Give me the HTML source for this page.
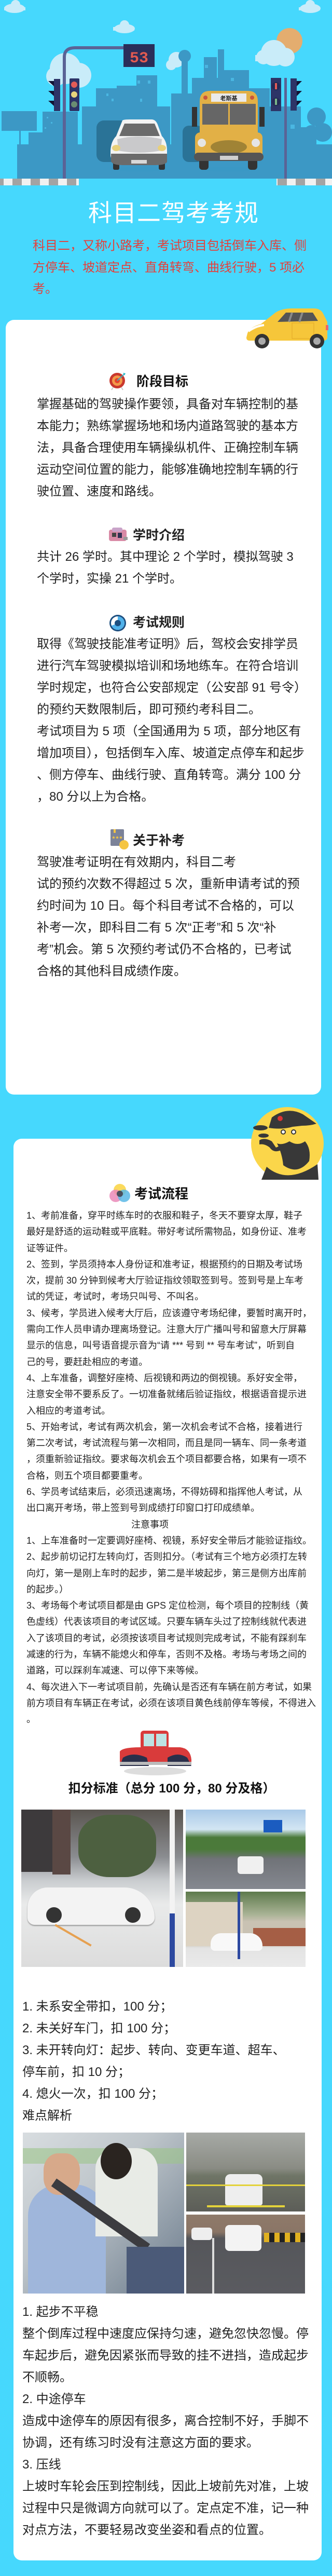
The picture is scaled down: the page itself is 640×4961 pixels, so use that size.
<!DOCTYPE html>
<html><head><meta charset="utf-8">
<style>
*{margin:0;padding:0;box-sizing:border-box}
html,body{width:640px;height:4961px;overflow:hidden}
body{background:#46d8fd;position:relative;font-family:"Liberation Sans","Noto Sans CJK SC",sans-serif;color:#222}
.abs{position:absolute}
.card{position:absolute;background:#fff;border-radius:16px}
.ln{white-space:nowrap}
.p24{font-size:24px;line-height:42px}
.p18{font-size:18px;line-height:31.3px}
.h{font-size:25px;font-weight:bold;line-height:42px;white-space:nowrap;color:#111}
.photo{position:absolute;overflow:hidden}
</style></head><body>

<!-- HERO -->
<svg class="abs" style="left:0;top:0" width="640" height="370" viewBox="0 0 640 370">
  <!-- clouds -->
  <g fill="#c9ecf9">
    <ellipse cx="28" cy="16" rx="20" ry="9"/><circle cx="30" cy="9" r="9"/><rect x="8" y="14" width="41" height="6"/>
    <ellipse cx="598" cy="16" rx="20" ry="9"/><circle cx="598" cy="9" r="9"/><rect x="576" y="14" width="41" height="6"/>
    <ellipse cx="240" cy="55" rx="20" ry="9"/><circle cx="240" cy="48" r="9"/><rect x="218" y="52" width="41" height="7"/>
    <circle cx="126" cy="132" r="30"/><circle cx="152" cy="145" r="24"/><circle cx="108" cy="147" r="19"/>
    <circle cx="340" cy="115" r="15"/><circle cx="330" cy="125" r="10"/>
  </g>
  <circle cx="558" cy="79" r="25" fill="#e4ad6f"/>
  <g fill="#c9ecf9"><circle cx="528" cy="102" r="25"/><circle cx="550" cy="110" r="18"/><circle cx="508" cy="110" r="14"/><rect x="492" y="106" width="74" height="12"/></g>
  <!-- buildings -->
  <g fill="#3c98c5">
    <rect x="33" y="278" width="607" height="66"/>
    <rect x="55" y="255" width="30" height="30"/>
    <rect x="82" y="215" width="68" height="70"/>
    <rect x="158" y="205" width="45" height="80"/>
    <rect x="185" y="170" width="40" height="70"/>
    <rect x="225" y="165" width="40" height="120"/>
    <rect x="263" y="145" width="40" height="140"/>
    <rect x="300" y="205" width="28" height="80"/>
    <rect x="330" y="180" width="40" height="110"/>
    <rect x="350" y="115" width="12" height="120"/>
    <circle cx="356" cy="108" r="12"/>
    <rect x="370" y="150" width="50" height="140"/>
    <rect x="393" y="110" width="25" height="60"/>
    <rect x="420" y="95" width="12" height="200"/>
    <rect x="432" y="135" width="48" height="160"/>
    <rect x="480" y="170" width="40" height="120"/>
    <rect x="520" y="205" width="60" height="90"/>
    <rect x="580" y="245" width="30" height="50"/>
    <circle cx="610" cy="225" r="18"/><circle cx="622" cy="255" r="18"/><circle cx="600" cy="255" r="14"/>
  </g>
  <g fill="#4ab7e2">
    <rect x="205" y="180" width="4" height="5"/><rect x="215" y="190" width="4" height="5"/><rect x="265" y="155" width="5" height="6"/><rect x="285" y="155" width="5" height="6"/>
    <rect x="270" y="190" width="4" height="6"/><rect x="90" y="225" width="3" height="3"/><rect x="98" y="235" width="3" height="3"/><rect x="86" y="245" width="3" height="3"/>
    <rect x="395" y="125" width="6" height="6"/><rect x="445" y="150" width="6" height="6"/><rect x="460" y="175" width="6" height="6"/><rect x="560" y="240" width="8" height="8"/>
  </g>
  <!-- billboard -->
  <rect x="3" y="214" width="68" height="38" fill="#3c98c5"/><rect x="37" y="250" width="3" height="94" fill="#3c98c5"/>
  <!-- left traffic pole -->
  <path d="M124 344 V110 Q124 92 145 92 H240" stroke="#5a6396" stroke-width="6" fill="none"/>
  <rect x="238" y="85" width="60" height="44" fill="#2a2f5a"/>
  <text x="268" y="120" text-anchor="middle" font-size="30" fill="#e25a50" font-family="Liberation Mono,monospace" font-weight="bold">53</text>
  <rect x="104" y="152" width="12" height="62" fill="#2d3467"/>
  <path d="M93 156h11v10zM93 175h11v10zM93 194h11v10z" fill="#121535"/>
  <rect x="134" y="151" width="19" height="63" rx="2" fill="#2d3467"/>
  <circle cx="143" cy="163" r="6" fill="#e35b57"/><circle cx="143" cy="182" r="6" fill="#e9d57c"/><circle cx="143" cy="201" r="6" fill="#6a8d72"/>
  <!-- right lights -->
  <rect x="548" y="150" width="5" height="194" fill="#5a6396"/>
  <rect x="522" y="150" width="20" height="64" fill="#2d3467"/>
  <circle cx="532" cy="166" r="8" fill="#242a55"/><circle cx="532" cy="196" r="8" fill="#242a55"/>
  <rect x="530" y="160" width="4" height="12" fill="#e35b57"/><rect x="530" y="190" width="4" height="12" fill="#7bb58a"/>
  <rect x="560" y="151" width="12" height="62" fill="#2d3467"/>
  <path d="M572 156h10l-10 10zM572 175h10l-10 10zM572 194h10l-10 10z" fill="#121535"/>
  <!-- dark cars behind -->
  <rect x="186" y="232" width="60" height="80" rx="14" fill="#2a7397"/>
  <rect x="352" y="242" width="40" height="70" rx="12" fill="#2a7397"/>
  <!-- white car -->
  <ellipse cx="268" cy="326" rx="52" ry="4" fill="#3a98c5"/>
  <rect x="218" y="305" width="12" height="22" rx="3" fill="#333"/><rect x="306" y="305" width="12" height="22" rx="3" fill="#333"/>
  <path d="M236 232 Q238 230 250 230 H292 Q300 230 304 240 L312 262 Q322 272 322 290 V300 Q318 318 300 318 H236 Q216 318 213 300 V290 Q214 272 224 262 Z" fill="#f3f3f3"/>
  <path d="M230 262 L240 238 H298 L308 262Z" fill="#6b6b6b"/>
  <path d="M226 268 Q268 258 312 268 L310 290 Q268 298 228 290Z" fill="#c9c9cb"/>
  <path d="M214 296 H322 V312 Q318 318 300 318 H236 Q216 318 214 310Z" fill="#6b6b6b"/>
  <rect x="253" y="308" width="30" height="7" fill="#d8d8d8"/>
  <ellipse cx="224" cy="285" rx="8" ry="6" fill="#e8d07a"/><ellipse cx="312" cy="285" rx="8" ry="6" fill="#e8d07a"/>
  <!-- bus -->
  <ellipse cx="440" cy="326" rx="60" ry="4" fill="#3a98c5"/>
  <rect x="384" y="305" width="18" height="22" rx="6" fill="#333"/><rect x="478" y="305" width="18" height="22" rx="6" fill="#333"/>
  <rect x="370" y="206" width="10" height="38" fill="#333"/><rect x="500" y="206" width="10" height="38" fill="#333"/>
  <path d="M385 195 Q385 175 405 175 H478 Q497 175 497 195 V258 H385 Z" fill="#e2b046"/>
  <rect x="376" y="255" width="130" height="55" rx="10" fill="#e2b046"/>
  <rect x="407" y="180" width="68" height="16" fill="#eaeaea"/>
  <text x="441" y="193" text-anchor="middle" font-size="11" font-weight="bold" fill="#222">老斯基</text>
  <circle cx="396" cy="188" r="4" fill="#c9553e"/><circle cx="486" cy="188" r="4" fill="#c9553e"/>
  <rect x="390" y="200" width="50" height="40" fill="#666"/><rect x="443" y="200" width="50" height="40" fill="#666"/>
  <ellipse cx="441" cy="283" rx="35" ry="13" fill="#a08335"/>
  <circle cx="389" cy="275" r="8" fill="#e5e5e5"/><circle cx="493" cy="275" r="8" fill="#e5e5e5"/>
  <rect x="374" y="294" width="134" height="16" rx="8" fill="#555"/>
  <rect x="424" y="300" width="35" height="8" fill="#d0d0d0"/>
  <!-- curb -->
  <g><rect x="0" y="344" width="152" height="13" fill="#f1f1f1"/><rect x="533" y="344" width="107" height="13" fill="#f1f1f1"/>
  <g fill="#a3a3a3"><rect x="0" y="344" width="7" height="13"/><rect x="24" y="344" width="18" height="13"/><rect x="59" y="344" width="18" height="13"/><rect x="94" y="344" width="18" height="13"/><rect x="129" y="344" width="18" height="13"/>
  <rect x="535" y="344" width="18" height="13"/><rect x="570" y="344" width="18" height="13"/><rect x="609" y="344" width="18" height="13"/></g></g>
</svg>

<div class="abs" style="left:170px;top:382px;font-size:46px;line-height:56px;color:#fff;white-space:nowrap;letter-spacing:1px">科目二驾考考规</div>
<div class="abs p24" style="left:63px;top:453px;color:#e5403b;line-height:41.5px">
<div class="ln">科目二，又称小路考，考试项目包括倒车入库、侧</div>
<div class="ln">方停车、坡道定点、直角转弯、曲线行驶，5 项必</div>
<div class="ln">考。</div></div>

<!-- CARD 1 -->
<div class="card" style="left:11px;top:616px;width:608px;height:1492px"></div>
<!-- yellow car -->
<svg class="abs" style="left:473px;top:590px" width="162" height="84" viewBox="0 0 162 84">
  <path d="M4 52 Q8 40 30 34 L58 12 Q70 4 90 4 H132 Q145 4 150 14 L158 30 V60 Q158 66 150 66 H8 Q2 66 2 60Z" fill="#f6c63a"/>
  <path d="M62 30 L78 12 H130 L140 28Z" fill="#555"/>
  <path d="M90 12 L84 30 M110 12 L104 30" stroke="#8a8a8a" stroke-width="4"/>
  <path d="M6 48 Q20 38 36 36" stroke="#fff" stroke-width="4" fill="none"/>
  <rect x="90" y="32" width="42" height="30" fill="none" stroke="#e2a826" stroke-width="1"/>
  <circle cx="32" cy="67" r="14" fill="#333"/><circle cx="32" cy="67" r="7" fill="#aaa"/>
  <circle cx="138" cy="67" r="14" fill="#333"/><circle cx="138" cy="67" r="7" fill="#aaa"/>
  <rect x="155" y="36" width="5" height="10" fill="#e66"/>
</svg>

<!-- headings card1 -->
<svg class="abs" style="left:210px;top:716px" width="34" height="36" viewBox="0 0 34 36"><circle cx="16" cy="17" r="15" fill="#c9382e"/><circle cx="16" cy="17" r="10" fill="#f29a4a"/><circle cx="16" cy="17" r="5" fill="#e4432f"/><path d="M16 17 L30 4" stroke="#4ab" stroke-width="2"/><path d="M27 2l5 1-2 4z" fill="#2bc"/><path d="M8 30l-3 5M24 30l3 5" stroke="#ccc" stroke-width="2"/></svg>
<div class="abs h" style="left:263px;top:714px">阶段目标</div>
<div class="abs p24" style="left:71px;top:758px">
<div class="ln">掌握基础的驾驶操作要领，具备对车辆控制的基</div>
<div class="ln">本能力；熟练掌握场地和场内道路驾驶的基本方</div>
<div class="ln">法，具备合理使用车辆操纵机件、正确控制车辆</div>
<div class="ln">运动空间位置的能力，能够准确地控制车辆的行</div>
<div class="ln">驶位置、速度和路线。</div>
<div class="ln">&nbsp;</div>
<div class="ln" style="position:relative;padding-left:185px;font-weight:bold;font-size:25px">学时介绍</div>
<div class="ln">共计 26 学时。其中理论 2 个学时，模拟驾驶 3</div>
<div class="ln">个学时，实操 21 个学时。</div>
<div class="ln">&nbsp;</div>
<div class="ln" style="padding-left:185px;font-weight:bold;font-size:25px">考试规则</div>
<div class="ln">取得《驾驶技能准考证明》后，驾校会安排学员</div>
<div class="ln">进行汽车驾驶模拟培训和场地练车。在符合培训</div>
<div class="ln">学时规定，也符合公安部规定（公安部 91 号令）</div>
<div class="ln">的预约天数限制后，即可预约考科目二。</div>
<div class="ln">考试项目为 5 项（全国通用为 5 项，部分地区有</div>
<div class="ln">增加项目），包括倒车入库、坡道定点停车和起步</div>
<div class="ln">、侧方停车、曲线行驶、直角转弯。满分 100 分</div>
<div class="ln">，80 分以上为合格。</div>
<div class="ln">&nbsp;</div>
<div class="ln" style="padding-left:185px;font-weight:bold;font-size:25px">关于补考</div>
<div class="ln">驾驶准考证明在有效期内，科目二考</div>
<div class="ln">试的预约次数不得超过 5 次，重新申请考试的预</div>
<div class="ln">约时间为 10 日。每个科目考试不合格的，可以</div>
<div class="ln">补考一次，即科目二有 5 次“正考”和 5 次“补</div>
<div class="ln">考”机会。第 5 次预约考试仍不合格的，已考试</div>
<div class="ln">合格的其他科目成绩作废。</div>
</div>
<!-- icons for headings 2-4 -->
<svg class="abs" style="left:208px;top:1014px" width="40" height="32" viewBox="0 0 40 32"><rect x="2" y="6" width="34" height="22" rx="4" fill="#d98aa6"/><rect x="8" y="2" width="20" height="8" rx="3" fill="#c9a3c9"/><rect x="8" y="12" width="8" height="8" fill="#444"/><rect x="19" y="12" width="8" height="10" fill="#335"/><rect x="30" y="20" width="8" height="6" fill="#999"/></svg>
<svg class="abs" style="left:210px;top:1183px" width="34" height="34" viewBox="0 0 34 34"><circle cx="17" cy="17" r="16" fill="#1d4f80"/><circle cx="17" cy="17" r="13" fill="#fff"/><path d="M17 4 A13 13 0 1 1 5 22 L17 17Z" fill="#4fb1ea"/><circle cx="17" cy="17" r="6" fill="#1d4f80"/></svg>
<svg class="abs" style="left:213px;top:1597px" width="36" height="40" viewBox="0 0 36 40"><rect x="0" y="0" width="26" height="32" rx="2" fill="#7b8298"/><rect x="6" y="0" width="4" height="7" fill="#f5c542"/><text x="13" y="18" font-size="7" fill="#f5c542" text-anchor="middle">★★★</text><circle cx="26" cy="30" r="9" fill="#f5c542"/></svg>

<!-- CARD 2 -->
<div class="card" style="left:26px;top:2193px;width:594px;height:2738px"></div>
<svg class="abs" style="left:484px;top:2132px" width="140" height="140" viewBox="0 0 140 140">
  <circle cx="70" cy="70" r="70" fill="#fbd64a"/>
  <path d="M40 20 Q70 -2 100 14 L126 32 Q114 36 98 36 L80 38 Q60 44 34 40 Z" fill="#383838"/>
  <circle cx="56" cy="22" r="5" fill="#d33"/>
  <path d="M46 42 Q48 80 60 100 L70 110 Q100 120 112 96 Q120 80 112 56 Q108 42 100 40 Z" fill="#fbd64a"/>
  <path d="M50 70 Q60 90 62 112 Q90 132 112 104 Q116 80 104 66 Q90 76 74 66 Q60 74 50 70Z" fill="#383838"/>
  <path d="M30 115 Q70 150 128 110 L130 140 H20Z" fill="#383838"/>
  <path d="M16 64 Q26 58 40 66 L48 78 L62 72 L60 82 Q44 90 36 78 Q26 70 16 72Z" fill="#383838"/>
  <ellipse cx="18" cy="40" rx="14" ry="5" fill="#383838"/><ellipse cx="24" cy="55" rx="10" ry="4" fill="#383838"/><ellipse cx="26" cy="66" rx="6" ry="3" fill="#383838"/>
  <circle cx="62" cy="48" r="4" fill="#fff" stroke="#333" stroke-width="2"/><circle cx="82" cy="48" r="4" fill="#fff" stroke="#333" stroke-width="2"/>
</svg>
<svg class="abs" style="left:211px;top:2279px" width="40" height="38" viewBox="0 0 40 38"><circle cx="20" cy="13" r="12" fill="#fbd64a" opacity=".9"/><circle cx="12" cy="24" r="12" fill="#ea8ab9" opacity=".85"/><circle cx="28" cy="24" r="12" fill="#5ab9e6" opacity=".85"/><circle cx="20" cy="20" r="6" fill="#4a4f5e"/></svg>
<div class="abs h" style="left:259px;top:2278px;font-size:26px">考试流程</div>
<div class="abs p18" style="left:51px;top:2326px">
<div class="ln">1、考前准备，穿平时练车时的衣服和鞋子，冬天不要穿太厚，鞋子</div>
<div class="ln">最好是舒适的运动鞋或平底鞋。带好考试所需物品，如身份证、准考</div>
<div class="ln">证等证件。</div>
<div class="ln">2、签到，学员须持本人身份证和准考证，根据预约的日期及考试场</div>
<div class="ln">次，提前 30 分钟到候考大厅验证指纹领取签到号。签到号是上车考</div>
<div class="ln">试的凭证，考试时，考场只叫号、不叫名。</div>
<div class="ln">3、候考，学员进入候考大厅后，应该遵守考场纪律，要暂时离开时，</div>
<div class="ln">需向工作人员申请办理离场登记。注意大厅广播叫号和留意大厅屏幕</div>
<div class="ln">显示的信息，叫号语音提示音为“请 *** 号到 ** 号车考试”，听到自</div>
<div class="ln">己的号，要赶赴相应的考道。</div>
<div class="ln">4、上车准备，调整好座椅、后视镜和两边的倒视镜。系好安全带，</div>
<div class="ln">注意安全带不要系反了。一切准备就绪后验证指纹，根据语音提示进</div>
<div class="ln">入相应的考道考试。</div>
<div class="ln">5、开始考试，考试有两次机会，第一次机会考试不合格，接着进行</div>
<div class="ln">第二次考试，考试流程与第一次相同，而且是同一辆车、同一条考道</div>
<div class="ln">，须重新验证指纹。要求每次机会五个项目都要合格，如果有一项不</div>
<div class="ln">合格，则五个项目都要重考。</div>
<div class="ln">6、学员考试结束后，必须迅速离场，不得妨碍和指挥他人考试，从</div>
<div class="ln">出口离开考场，带上签到号到成绩打印窗口打印成绩单。</div>
<div class="ln" style="padding-left:202px">注意事项</div>
<div class="ln">1、上车准备时一定要调好座椅、视镜，系好安全带后才能验证指纹。</div>
<div class="ln">2、起步前切记打左转向灯，否则扣分。（考试有三个地方必须打左转</div>
<div class="ln">向灯，第一是刚上车时的起步，第二是半坡起步，第三是侧方出库前</div>
<div class="ln">的起步。）</div>
<div class="ln">3、考场每个考试项目都是由 GPS 定位检测，每个项目的控制线（黄</div>
<div class="ln">色虚线）代表该项目的考试区域。只要车辆车头过了控制线就代表进</div>
<div class="ln">入了该项目的考试，必须按该项目考试规则完成考试，不能有踩刹车</div>
<div class="ln">减速的行为，车辆不能熄火和停车，否则不及格。考场与考场之间的</div>
<div class="ln">道路，可以踩刹车减速、可以停下来等候。</div>
<div class="ln">4、每次进入下一考试项目前，先确认是否还有车辆在前方考试，如果</div>
<div class="ln">前方项目有车辆正在考试，必须在该项目黄色线前停车等候，不得进入</div>
<div class="ln">。</div>
</div>
<!-- red truck -->
<svg class="abs" style="left:227px;top:3329px" width="144" height="92" viewBox="0 0 144 92">
  <ellipse cx="72" cy="82" rx="60" ry="8" fill="#ddd"/>
  <rect x="44" y="4" width="54" height="36" rx="6" fill="#d93b3b"/>
  <rect x="50" y="10" width="20" height="24" fill="#bde3e3"/><rect x="74" y="10" width="20" height="24" fill="#bde3e3"/>
  <path d="M4 44 Q10 36 44 36 H120 Q140 38 142 60 V66 H4Z" fill="#d93b3b"/>
  <path d="M10 56 Q30 44 56 56 L60 72 H4Z M96 56 Q116 44 134 56 L142 72 H96Z" fill="#2a2f4a"/>
  <rect x="4" y="64" width="138" height="6" fill="#bbb"/>
</svg>
<div class="abs h" style="left:0;width:662px;text-align:center;top:3424px;font-size:24px">扣分标准（总分 100 分，80 分及格）</div>

<!-- photos 1 -->
<div class="photo" style="left:41px;top:3485px;width:312px;height:303px;background:linear-gradient(#5a5550 0,#8a8c90 30%,#c9cccf 45%,#e9eaea 60%,#dcdcdc 100%)">
  <div class="abs" style="left:0;top:0;width:60px;height:120px;background:#3d3a3c"></div>
  <div class="abs" style="left:60px;top:0;width:35px;height:125px;background:#5a4844"></div>
  <div class="abs" style="left:110px;top:10px;width:150px;height:120px;background:#4d6040;border-radius:40%"></div>
  <div class="abs" style="left:12px;top:150px;width:245px;height:72px;background:#f3f3f3;border-radius:40px 60px 14px 14px;box-shadow:0 2px 2px #999"></div>
  <div class="abs" style="left:48px;top:188px;width:30px;height:30px;border-radius:50%;background:#333"></div>
  <div class="abs" style="left:200px;top:188px;width:30px;height:30px;border-radius:50%;background:#333"></div>
  <div class="abs" style="left:286px;top:0;width:10px;height:303px;background:#f3f3f3"></div>
  <div class="abs" style="left:286px;top:200px;width:10px;height:103px;background:#2d49a0"></div>
  <div class="abs" style="left:60px;top:240px;width:80px;height:4px;background:#e6a050;transform:rotate(30deg)"></div>
</div>
<div class="photo" style="left:358px;top:3485px;width:231px;height:153px;background:linear-gradient(#a9c9e8 0,#d3e6f3 25%,#4b7a3a 35%,#4b7a3a 50%,#707378 62%,#858890 100%)">
  <div class="abs" style="left:150px;top:20px;width:36px;height:24px;background:#1b5cc0"></div>
  <div class="abs" style="left:100px;top:90px;width:50px;height:34px;background:#f0f0f0;border-radius:6px"></div>
</div>
<div class="photo" style="left:358px;top:3643px;width:231px;height:145px;background:linear-gradient(#5d7a4c 0,#a8b294 30%,#c9c2b3 40%,#c9c2b3 68%,#e3e3e3 75%,#eaeaea 100%)">
  <div class="abs" style="left:0;top:20px;width:110px;height:85px;background:#ddd3c2"></div>
  <div class="abs" style="left:130px;top:70px;width:101px;height:35px;background:#a55e45"></div>
  <div class="abs" style="left:48px;top:80px;width:100px;height:34px;background:#f8f8f8;border-radius:20px 24px 8px 8px"></div>
  <div class="abs" style="left:100px;top:0;width:5px;height:130px;background:#2d49a0"></div>
</div>

<div class="abs p24" style="left:43px;top:3844px">
<div class="ln">1. 未系安全带扣，100 分；</div>
<div class="ln">2. 未关好车门，扣 100 分；</div>
<div class="ln">3. 未开转向灯：起步、转向、变更车道、超车、</div>
<div class="ln">停车前，扣 10 分；</div>
<div class="ln">4. 熄火一次，扣 100 分；</div>
<div class="ln">难点解析</div>
</div>

<!-- photos 2 -->
<div class="photo" style="left:44px;top:4107px;width:311px;height:310px;background:linear-gradient(135deg,#d8dde0 0,#bfc6cb 40%,#6b7b8c 100%)">
  <div class="abs" style="left:0;top:30px;width:310px;height:30px;background:#9dc48a;opacity:.6"></div>
  <div class="abs" style="left:10px;top:100px;width:150px;height:210px;background:#9fb6db;border-radius:60px 60px 0 0"></div>
  <div class="abs" style="left:40px;top:40px;width:70px;height:80px;background:#d7a98a;border-radius:40%"></div>
  <div class="abs" style="left:140px;top:30px;width:120px;height:170px;background:#e8ebe6;border-radius:40px 40px 0 0"></div>
  <div class="abs" style="left:150px;top:20px;width:60px;height:70px;background:#2a2420;border-radius:50%"></div>
  <div class="abs" style="left:40px;top:150px;width:220px;height:18px;background:#3c3c40;transform:rotate(35deg)"></div>
  <div class="abs" style="left:200px;top:220px;width:111px;height:90px;background:#4b5a78"></div>
</div>
<div class="photo" style="left:359px;top:4107px;width:229px;height:152px;background:linear-gradient(#a7aaa6 0,#8a8c84 45%,#6f7566 55%,#5c5d58 100%)">
  <div class="abs" style="left:75px;top:80px;width:72px;height:60px;background:#eeeeee;border-radius:10px 10px 4px 4px"></div>
  <div class="abs" style="left:0;top:100px;width:229px;height:3px;background:#e3d23a"></div>
  <div class="abs" style="left:40px;top:140px;width:150px;height:4px;background:#e3d23a"></div>
</div>
<div class="photo" style="left:359px;top:4265px;width:229px;height:152px;background:linear-gradient(#8f7a6a 0,#8a7566 22%,#55565a 30%,#5a5b60 100%)">
  <div class="abs" style="left:10px;top:25px;width:40px;height:24px;background:#eee;border-radius:6px"></div>
  <div class="abs" style="left:75px;top:20px;width:70px;height:50px;background:#f3f3f3;border-radius:8px"></div>
  <div class="abs" style="left:150px;top:35px;width:79px;height:18px;background:repeating-linear-gradient(90deg,#e0b020 0 10px,#222 10px 20px)"></div>
  <div class="abs" style="left:50px;top:45px;width:4px;height:107px;background:#ddd"></div>
</div>

<div class="abs p24" style="left:43px;top:4432px;line-height:42px">
<div class="ln">1. 起步不平稳</div>
<div class="ln">整个倒库过程中速度应保持匀速，避免忽快忽慢。停</div>
<div class="ln">车起步后，避免因紧张而导致的挂不进挡，造成起步</div>
<div class="ln">不顺畅。</div>
<div class="ln">2. 中途停车</div>
<div class="ln">造成中途停车的原因有很多，离合控制不好，手脚不</div>
<div class="ln">协调，还有练习时没有注意这方面的要求。</div>
<div class="ln">3. 压线</div>
<div class="ln">上坡时车轮会压到控制线，因此上坡前先对准，上坡</div>
<div class="ln">过程中只是微调方向就可以了。定点定不准，记一种</div>
<div class="ln">对点方法，不要轻易改变坐姿和看点的位置。</div>
</div>

</body></html>
